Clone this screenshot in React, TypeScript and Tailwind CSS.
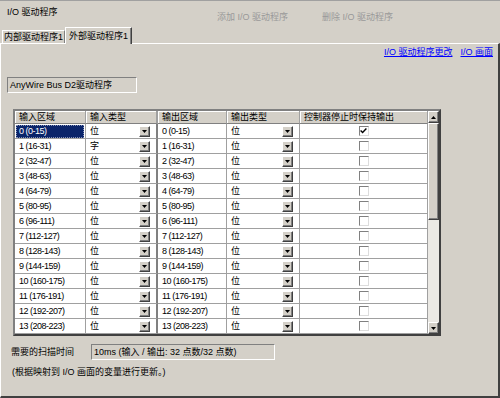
import React from 'react'

const ROWS = Array.from({ length: 14 }, (_, i) => ({
  range: `${i} (${i * 16}-${i * 16 + 15})`,
  inType: i === 1 ? '字' : '位',
  outType: '位',
  hold: i === 0,
}))

function DropButton() {
  return (
    <div className="w-[11px] h-[11px] shrink-0 bg-[#d4d0c8] border border-t-white border-l-white border-r-[#404040] border-b-[#404040] shadow-[inset_-1px_-1px_0_#808080] flex items-center justify-center">
      <svg width="5" height="3" viewBox="0 0 5 3">
        <path d="M0 0h5L2.5 3z" fill="#000" />
      </svg>
    </div>
  )
}

function ArrowButton({ up }: { up?: boolean }) {
  return (
    <div className="w-[11px] h-[12px] shrink-0 bg-[#d4d0c8] border border-t-white border-l-white border-r-[#404040] border-b-[#404040] shadow-[inset_-1px_-1px_0_#808080] flex items-center justify-center">
      <svg width="5" height="3" viewBox="0 0 5 3">
        <path d={up ? 'M2.5 0L5 3H0z' : 'M0 0h5L2.5 3z'} fill="#000" />
      </svg>
    </div>
  )
}

function CheckBox({ on }: { on: boolean }) {
  return (
    <div className="w-[10px] h-[10px] bg-white border border-t-[#808080] border-l-[#808080] border-r-[#dcdcdc] border-b-[#dcdcdc] flex items-center justify-center">
      {on && (
        <svg width="7" height="6" viewBox="0 0 7 6">
          <path d="M0.6 2.6l2 2 3.8-4" stroke="#000" strokeWidth="1.4" fill="none" />
        </svg>
      )}
    </div>
  )
}

const headCell =
  'h-[13px] bg-[#d4d0c8] border-r border-b border-r-[#a0a0a0] border-b-[#808080] shadow-[inset_1px_1px_0_#fff] pl-[4px] flex items-center whitespace-nowrap'
const cell = 'h-[15px] bg-white border-r border-b border-[#a0a0a0] flex items-center whitespace-nowrap'
const num = 'text-[9px] tracking-[-0.5px]'

export default function App() {
  return (
    <div className="w-[500px] h-[398px] bg-[#d4d0c8] border-t border-t-[#a0a0a0] flex flex-col overflow-hidden font-['Liberation_Sans','Noto_Sans_CJK_SC',sans-serif] text-[9px] leading-[12px] text-black">
      {/* Header */}
      <div className="flex h-[26px] shrink-0">
        <div className="w-[217px] pl-[7px] pt-[5px]">I/O 驱动程序</div>
        <div className="w-[105px] pt-[10px] text-[#999]">添加 I/O 驱动程序</div>
        <div className="pt-[10px] text-[#999]">删除 I/O 驱动程序</div>
      </div>

      {/* Tabs */}
      <div className="flex items-end h-[16px] shrink-0 pl-[2px]">
        <div className="w-[63px] h-[13px] border-t border-l border-t-white border-l-white border-r border-r-[#808080] flex items-center justify-center">
          内部驱动程序1
        </div>
        <div className="relative z-10 w-[67px] h-[17px] -mb-[1px] bg-[#d4d0c8] border-t border-l border-t-white border-l-white border-r border-r-[#404040] shadow-[inset_-1px_0_0_#808080] flex items-center justify-center pb-[1px]">
          外部驱动程序1
        </div>
      </div>

      {/* Panel */}
      <div className="flex-1 flex flex-col border-t border-l border-t-white border-l-white border-r-2 border-b-2 border-r-[#404040] border-b-[#404040]">
        <div className="mt-[1px] h-[14px] flex items-center justify-end gap-[8px] pr-[5px] text-[#0000ff] underline">
          <span>I/O 驱动程序更改</span>
          <span>I/O 画面</span>
        </div>

        <div className="mt-[18px] ml-[6px] w-[130px] h-[16px] border border-t-[#808080] border-l-[#808080] border-r-white border-b-white flex items-center pl-[2px] whitespace-nowrap">
          AnyWire Bus D2驱动程序
        </div>

        {/* Grid */}
        <div className="mt-[16px] ml-[12px] w-[428px] flex border-2 border-t-[#808080] border-l-[#808080] border-r-[#404040] border-b-[#404040]">
          <div className="flex flex-col">
            <div className="flex">
              <div className={`${headCell} w-[71px]`}>输入区域</div>
              <div className={`${headCell} w-[72px] border-r-2 border-r-[#808080]`}>输入类型</div>
              <div className={`${headCell} w-[69px]`}>输出区域</div>
              <div className={`${headCell} w-[73px]`}>输出类型</div>
              <div className={`${headCell} w-[128px]`}>控制器停止时保持输出</div>
            </div>
            {ROWS.map((r, i) => (
              <div key={i} className="flex">
                <div className={`${cell} w-[71px]`}>
                  {i === 0 ? (
                    <div className={`ml-[1px] w-[68px] h-[13px] bg-[#0a246a] text-white outline outline-1 outline-dotted outline-[#8894b8] -outline-offset-1 flex items-center pl-[3px] ${num}`}>
                      {r.range}
                    </div>
                  ) : (
                    <span className={`pl-[4px] ${num}`}>{r.range}</span>
                  )}
                </div>
                <div className={`${cell} w-[72px] border-r-2 border-r-[#808080] pl-[4px] pr-[6px] justify-between`}>
                  <span>{r.inType}</span>
                  <DropButton />
                </div>
                <div className={`${cell} w-[69px]`}>
                  <span className={`pl-[4px] ${num}`}>{r.range}</span>
                </div>
                <div className={`${cell} w-[73px] pl-[4px] pr-[6px] justify-between`}>
                  <span>{r.outType}</span>
                  <DropButton />
                </div>
                <div className={`${cell} w-[128px] justify-center`}>
                  <CheckBox on={r.hold} />
                </div>
              </div>
            ))}
          </div>

          {/* Scrollbar */}
          <div className="w-[11px] flex flex-col">
            <ArrowButton up />
            <div className="h-[97px] bg-[#d4d0c8] border border-t-white border-l-white border-r-[#404040] border-b-[#404040] shadow-[inset_-1px_-1px_0_#808080]" />
            <div className="flex-1 bg-[#ebe9e4]" />
            <ArrowButton />
          </div>
        </div>

        {/* Scan time */}
        <div className="mt-[8px] flex items-center h-[16px]">
          <div className="ml-[10px] w-[80px] whitespace-nowrap">需要的扫描时间</div>
          <div className="w-[184px] h-[16px] border border-t-[#808080] border-l-[#808080] border-r-white border-b-white flex items-center pl-[2px] whitespace-nowrap">
            10ms (输入 / 输出: 32 点数/32 点数)
          </div>
        </div>

        <div className="mt-[6px] ml-[11px] h-[12px] whitespace-nowrap">
          (根据映射到 I/O 画面的变量进行更新。)
        </div>
      </div>
    </div>
  )
}
